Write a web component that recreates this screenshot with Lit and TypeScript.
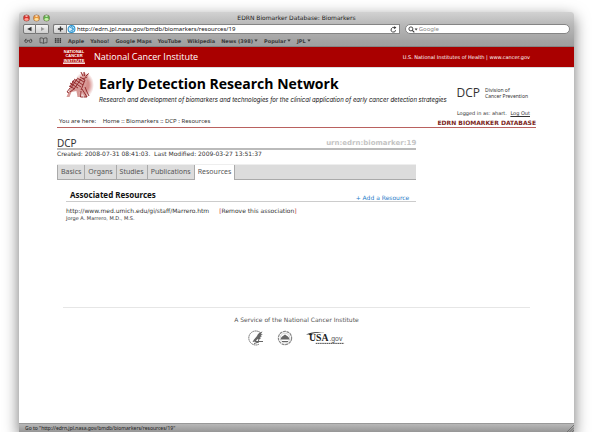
import { LitElement, html, css, svg } from "lit";
import { customElement } from "lit/decorators.js";

const bookmarks = [
  { label: "Apple" },
  { label: "Yahoo!" },
  { label: "Google Maps" },
  { label: "YouTube" },
  { label: "Wikipedia" },
  { label: "News (398)", menu: true },
  { label: "Popular", menu: true },
  { label: "JPL", menu: true },
];

const tabs = ["Basics", "Organs", "Studies", "Publications", "Resources"];

@customElement("browser-chrome")
class BrowserChrome extends LitElement {
  static styles = css`
    :host {
      display: block;
      background: linear-gradient(#d2d2d2, #b9b9b9 12px, #a2a2a2 30px, #9f9f9f);
      border-radius: 3px 3px 0 0;
      border-bottom: 1px solid #858585;
      font: 6px/10px "DejaVu Sans", sans-serif;
      color: #222;
    }
    * { box-sizing: border-box; }
    .title {
      display: grid;
      grid-template-columns: 1fr auto 1fr;
      align-items: center;
      height: 11px;
      padding: 0 4px;
    }
    .lights { width: 28px; height: 8px; display: block; }
    .tools {
      display: flex;
      align-items: center;
      height: 12px;
      padding: 0 4px;
    }
    button {
      flex: none;
      display: flex;
      align-items: center;
      justify-content: center;
      width: 13px;
      height: 10px;
      padding: 0;
      border: 1px solid #777;
      background: linear-gradient(#f4f4f4, #cfcfcf);
    }
    button svg { width: 7px; height: 6px; }
    .back { border-radius: 2px 0 0 2px; }
    .forward { border-radius: 0 2px 2px 0; border-left: 0; }
    .add { border-radius: 2px 0 0 2px; margin-left: 4px; border-right: 0; }
    .field {
      display: flex;
      align-items: center;
      height: 10px;
      background: #fff;
      border: 1px solid #858585;
      min-width: 0;
    }
    .address { flex: 335 1 0; }
    .search { flex: 163 1 0; border-radius: 5px; margin-left: 5px; padding-left: 2px; }
    .field svg { flex: none; display: block; }
    .globe { width: 9px; height: 8px; }
    .reload { width: 7px; height: 7px; margin-right: 2px; }
    .lens { width: 10px; height: 7px; }
    input {
      flex: 1;
      min-width: 0;
      height: 8px;
      padding: 0 0 0 1px;
      border: 0;
      outline: 0;
      background: none;
      color: #111;
      font: 6px/8px "Noto Sans", sans-serif;
    }
    input::placeholder { color: #888; }
    .marks {
      display: flex;
      align-items: center;
      gap: 6px;
      height: 11px;
      padding-left: 5px;
      font-size: 5px;
      font-weight: 700;
      color: #3c3c3c;
    }
    .marks svg { display: block; height: 7px; }
    .marks a { color: inherit; text-decoration: none; white-space: nowrap; display: flex; align-items: center; gap: 1px; }
    .marks .caret { width: 4px; height: 3px; }
    .glasses { width: 9px; }
    .book { width: 9px; }
    .cells { width: 8px; }
  `;

  render() {
    return html`
      <div class="title">
        <svg class="lights" viewBox="0 0 28 8">
          ${[["#d8312b", "#ff9c90"], ["#e8953a", "#ffe09a"], ["#5fae4c", "#c6f0a4"]].map(
            ([a, b], i) => svg`
              <circle cx=${3.5 + i * 10} cy="4" r="3.2" fill=${a} stroke="#7a5a50" stroke-width=".4"/>
              <ellipse cx=${3.5 + i * 10} cy="5.4" rx="2" ry="1.3" fill=${b}/>
              <ellipse cx=${3.5 + i * 10} cy="2.1" rx="1.5" ry=".8" fill="#fff" opacity=".7"/>`
          )}
        </svg>
        <span>EDRN Biomarker Database: Biomarkers</span>
      </div>
      <div class="tools">
        <button class="back" aria-label="Back"><svg viewBox="0 0 7 6"><path d="M5.5 .8v4.4L1.2 3z" fill="#333"/></svg></button>
        <button class="forward" aria-label="Forward"><svg viewBox="0 0 7 6"><path d="M2 1v4l3.6-2z" fill="#999"/></svg></button>
        <button class="add" aria-label="Add bookmark"><svg viewBox="0 0 7 6"><path d="M3.5 .4v5.2M.9 3h5.2" stroke="#333" stroke-width="1.3"/></svg></button>
        <div class="field address">
          <svg class="globe" viewBox="0 0 9 8"><circle cx="4.5" cy="4" r="3.4" fill="#d8effa" stroke="#2a93cf" stroke-width="1.1"/><path d="M2.5 2l4 2-3.6 2.6M4 .8l2.5 3.2L5 7" fill="none" stroke="#2a93cf" stroke-width=".8"/></svg>
          <input aria-label="Address" value="http://edrn.jpl.nasa.gov/bmdb/biomarkers/resources/19">
          <svg class="reload" viewBox="0 0 7 7"><path d="M5.6 4.2A2.3 2.3 0 1 1 4.6 1.9" fill="none" stroke="#333" stroke-width=".9"/><path d="M3.8 .2l2.6 1-1.9 2z" fill="#333"/></svg>
        </div>
        <div class="field search">
          <svg class="lens" viewBox="0 0 10 7"><circle cx="2.9" cy="2.9" r="2" fill="none" stroke="#333" stroke-width=".9"/><path d="M4.3 4.3l2 2" stroke="#333" stroke-width="1.1"/><path d="M6.6 2.6h3L8.1 4.4z" fill="#333"/></svg>
          <input aria-label="Search" placeholder="Google">
        </div>
      </div>
      <nav class="marks">
        <svg class="glasses" viewBox="0 0 10 7"><g fill="none" stroke="#3c3c3c" stroke-width=".8"><circle cx="2.4" cy="4.2" r="1.5"/><circle cx="7.2" cy="4.2" r="1.5"/><path d="M.9 3.8L2.2 1.6M8.7 3.8L7.6 1.6M3.9 3.8q.9-.7 1.8 0"/></g></svg>
        <svg class="book" viewBox="0 0 8 7"><path d="M4 1.6Q2.4.5.5 1v4.8q2-.4 3.5.6 1.5-1 3.5-.6V1Q5.6.5 4 1.6v4.7" fill="none" stroke="#3c3c3c" stroke-width=".7"/></svg>
        <svg class="cells" viewBox="0 0 7 7"><path d="M.9 1v5M2.6 1v5M4.3 1v5M6 1v5" stroke="#3c3c3c" stroke-width="1.1" stroke-dasharray="1.4 .4"/></svg>
        ${bookmarks.map(
          (b) => html`<a href="#">${b.label}${b.menu
            ? html`<svg class="caret" viewBox="0 0 4 3"><path d="M.3.4h3.4L2 2.8z" fill="#3c3c3c"/></svg>`
            : ""}</a>`
        )}
      </nav>
    `;
  }
}

@customElement("app-root")
class AppRoot extends LitElement {
  static styles = css`
    :host {
      display: block;
      box-sizing: border-box;
      min-height: 100vh;
      padding: 12px 19px 0;
      overflow: hidden;
      background: #fff;
      font: 6px/8px "DejaVu Sans", sans-serif;
      color: #333;
    }
    * { box-sizing: border-box; }
    a { color: inherit; text-decoration: none; }
    h1, h2, h3, p { margin: 0; }
    svg { display: block; flex: none; }
    .window {
      display: flex;
      flex-direction: column;
      min-height: calc(100vh - 12px);
      background: #fff;
      border-radius: 3px 3px 0 0;
      box-shadow: 0 5px 15px rgba(0, 0, 0, 0.55);
    }
    .banner {
      display: flex;
      align-items: center;
      gap: 9px;
      height: 20px;
      padding: 0 44px;
      background: #a90000;
      color: #fff;
      font: 9px/12px "Open Sans", sans-serif;
      box-shadow: 0 1px #ddd;
    }
    .banner .links { margin-left: auto; font: 5px/8px "DejaVu Sans", sans-serif; }
    .nci { width: 22px; height: 14px; }
    .page { flex: 1; padding: 4px 38px 0; }
    .head { display: flex; justify-content: space-between; }
    .brand { display: flex; gap: 5px; padding-left: 8px; }
    .animal { width: 29px; height: 28px; }
    .brand h1 { padding-top: 4px; font: 700 14px/18px "Open Sans", sans-serif; color: #000; white-space: nowrap; }
    .brand p { font: italic 6px/8px Inter, sans-serif; color: #111; white-space: nowrap; padding-top: 3px; }
    .division {
      display: flex;
      align-items: center;
      gap: 5px;
      height: 14px;
      margin: 15px 8px 0 0;
      font: 5px/6px "Noto Sans", sans-serif;
    }
    .division b { font: 12px/14px "Open Sans", sans-serif; }
    .division span { white-space: nowrap; }
    .session { padding: 9px 6px 0 0; text-align: right; font-size: 5px; line-height: 8px; }
    .session a { text-decoration: underline; margin-left: 2px; }
    .crumbs {
      display: flex;
      justify-content: space-between;
      align-items: flex-end;
      height: 11px;
      padding-left: 2px;
      border-bottom: 1px solid #b9615f;
    }
    .crumbs nav { font: 6px/12px "Noto Sans", sans-serif; }
    .crumbs nav a:first-of-type { margin-left: 5px; }
    .crumbs strong { color: #7b1f22; }
    .panel { width: 75%; min-height: 179px; padding-top: 10px; }
    .record {
      display: flex;
      justify-content: space-between;
      align-items: center;
      height: 12px;
      border-bottom: 2px solid #bbb;
    }
    .record h2 { font: 10px/12px "Noto Sans", sans-serif; }
    .record span { font-size: 7px; font-weight: 700; color: #c4c4c4; }
    .tabs {
      display: flex;
      height: 15px;
      margin-top: 7px;
      background: #dcdcdc;
      border: solid #aaa;
      border-width: 0 0 1px 1px;
      box-shadow: 0 -1px #eee;
      font: 7px/14px "Noto Sans", sans-serif;
      color: #555;
    }
    .tabs a { padding: 0 3px; border-right: 1px solid #aaa; }
    .tabs .on { background: #fff; height: 15px; }
    .list { padding-left: 9px; }
    .bar {
      display: flex;
      justify-content: space-between;
      align-items: flex-end;
      height: 22px;
      padding: 0 7px 0 4px;
      border-bottom: 1px solid #ccc;
    }
    .bar h3 { font: 700 8px/12px "Noto Sans", sans-serif; color: #111; }
    .bar a { color: #2a7dc9; line-height: 6px; }
    .item { padding-top: 5px; }
    .item .remove { margin-left: 8px; }
    .item i { font-style: normal; color: #b33; }
    .item small { display: block; font-size: 5px; line-height: 6px; }
    footer {
      margin: 0 6px;
      padding-top: 8px;
      border-top: 1px solid #e6e6e6;
      text-align: center;
      color: #555;
    }
    .seals { display: flex; justify-content: center; align-items: center; gap: 13px; padding-top: 6px; }
    .seal { width: 16px; height: 16px; }
    .usa { width: 40px; height: 14px; }
    .status {
      display: flex;
      justify-content: space-between;
      align-items: center;
      height: 9px;
      padding-left: 6px;
      background: linear-gradient(#b8b8b8, #969696);
      border-top: 1px solid #999;
      font: 5px/8px "Noto Sans", sans-serif;
      color: #222;
    }
    .grip { width: 7px; height: 8px; }
  `;

  render() {
    return html`
      <div class="window">
        <browser-chrome></browser-chrome>
        <header class="banner">
          <svg class="nci" viewBox="0 0 22 14">
            <g fill="#fff" font-family="Liberation Sans" font-weight="700" text-anchor="middle">
              <text x="11" y="3.2" font-size="4">NATIONAL</text>
              <text x="11" y="7.4" font-size="4">CANCER</text>
              <text x="11" y="11.6" font-size="4">INSTITUTE</text>
            </g>
            <rect y="12.4" width="22" height="1.6" fill="#f6dada"/>
          </svg>
          <span>National Cancer Institute</span>
          <span class="links"><a href="#">U.S. National Institutes of Health</a> | <a href="#">www.cancer.gov</a></span>
        </header>
        <main class="page">
          <div class="head">
            <div class="brand">
              <svg class="animal" viewBox="0 0 29 28">
                <defs><radialGradient id="halo"><stop offset=".5" stop-color="#d58d8a"/><stop offset="1" stop-color="#d58d8a" stop-opacity="0"/></radialGradient></defs>
                <ellipse cx="19" cy="14" rx="10" ry="13" fill="url(#halo)"/>
                <path d="M15.5 1l2.5 3 1-3.5 2 3.5 3-2-1.5 5-1 6-2 6 2 4 1 3h-3l-3-6-2 1 1 5h-3l-1-6-5 1-2 5H1.5l3-7 1-6 4-4 5-1.5 3-2z" fill="#d79a97"/>
                <path d="M16 1l2 4M19 1l.5 4M23.5 2.5l-3 3M22 6l-4 2M15 6l5 3M12 7l7 4M9 8l9 6M7 10l9 6M5 12l8 5M4 15l6 3M20 9l-4 10M16 8l-7 10M12 8l-6 9M9 9l-4 7M5 17l-3 4 2 1M9 18l-4 3M17 18l5 8h-3M16 20l-.5 6h3M20 16l2 5 2 4" fill="none" stroke="#8c2023" stroke-width=".9"/>
              </svg>
              <div>
                <h1>Early Detection Research Network</h1>
                <p>Research and development of biomarkers and technologies for the clinical application of early cancer detection strategies</p>
              </div>
            </div>
            <div>
              <div class="division"><b>DCP</b><span>Division of<br>Cancer Prevention</span></div>
              <div class="session">Logged in as: ahart. <a href="#">Log Out</a></div>
            </div>
          </div>
          <div class="crumbs">
            <nav>You are here: <a href="#">Home</a> :: <a href="#">Biomarkers</a> :: <a href="#">DCP</a> : Resources</nav>
            <strong>EDRN BIOMARKER DATABASE</strong>
          </div>
          <section class="panel">
            <div class="record"><h2>DCP</h2><span>urn:edrn:biomarker:19</span></div>
            <p>Created: 2008-07-31 08:41:03.&nbsp; Last Modified: 2009-03-27 13:51:37</p>
            <nav class="tabs">
              ${tabs.map((t) => html`<a href="#" class=${t === "Resources" ? "on" : ""}>${t}</a>`)}
            </nav>
            <div class="list">
              <div class="bar"><h3>Associated Resources</h3><a href="#">+ Add a Resource</a></div>
              <div class="item">
                <a href="#">http://www.med.umich.edu/gi/staff/Marrero.htm</a>
                <span class="remove"><i>[</i><a href="#">Remove this association</a><i>]</i></span>
                <small>Jorge A. Marrero, M.D., M.S.</small>
              </div>
            </div>
          </section>
          <footer>
            <p>A Service of the National Cancer Institute</p>
            <div class="seals">
              <svg class="seal" viewBox="0 0 16 16">
                <path d="M11 14.2A7 7 0 1 1 12.5 2.8" fill="none" stroke="#777" stroke-width="1" stroke-dasharray="1.6 .4"/>
                <path d="M14.5 1.5Q10 2.5 9 6L6 9.5 4.5 12l3-.5L9.5 9l1 1L13 8.5 11.8 8 14 6l-1.6.2L14.8 4l-2 .3z" fill="#666"/>
                <path d="M7 11.5h8M8.5 13l2.5-3M6 13.5l5-1.5" fill="none" stroke="#666" stroke-width="1"/>
              </svg>
              <svg class="seal" viewBox="0 0 16 16"><circle cx="8" cy="8" r="6.6" fill="none" stroke="#888" stroke-width="1.2" stroke-dasharray="3 .6"/><circle cx="8" cy="8" r="4.8" fill="none" stroke="#aaa" stroke-width=".5"/><path d="M3.5 9.5h9L11.5 7 8 4.5 4.5 7zM5 11h6v1H5z" fill="#666"/></svg>
              <svg class="usa" viewBox="0 0 41 14">
                <path d="M0 3.5Q7-.5 20 1.5 10 .8 5 3l2 1-3 .3-1-1z" fill="#333"/>
                <text x="3" y="10.5" font-family="Liberation Serif" font-weight="700" font-size="10" fill="#222">USA</text>
                <text x="24" y="10.5" font-family="Liberation Sans" font-size="7" fill="#555">.gov</text>
                <path d="M10 12.5h29" stroke="#444" stroke-width="1" stroke-dasharray="1.5 .4"/>
              </svg>
            </div>
          </footer>
        </main>
        <div class="status">
          <span>Go to "http://edrn.jpl.nasa.gov/bmdb/biomarkers/resources/19"</span>
          <svg class="grip" viewBox="0 0 7 8"><path d="M0 8L7 1M2.5 8L7 3.5M5 8l2-2" stroke="#666" stroke-width=".8"/></svg>
        </div>
      </div>
    `;
  }
}
